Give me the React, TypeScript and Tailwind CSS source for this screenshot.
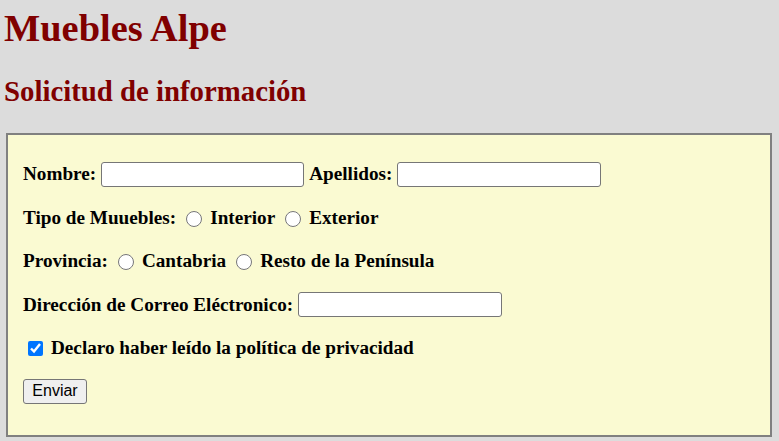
import React from "react";

export default function App() {
  const serif = "font-['Liberation_Serif','Times_New_Roman',serif]";
  return (
    <div className={`min-h-[441px] w-full bg-[#dcdcdc] ${serif} text-black`}>
      <h1 className="pt-[6px] pl-[4px] text-[38.4px] leading-[44px] font-bold text-[#800000]">
        Muebles Alpe
      </h1>
      <h2 className="mt-[24px] pl-[4px] text-[28.8px] leading-[34px] font-bold text-[#800000]">
        Solicitud de información
      </h2>
      <form
        onSubmit={(e) => e.preventDefault()}
        className="mt-[25px] ml-[6px] w-[766px] border-2 border-[#808080] bg-[#fafad2] pt-[26px] pb-[30px] pl-[15px] flex flex-col gap-[17.5px] text-[19.2px] leading-[22px] font-bold"
      >
        <div className="h-[26px] flex items-center">
          <span>Nombre:</span>
          <input
            type="text"
            className="ml-[5px] w-[203px] h-[25px] bg-white border border-[#767676] rounded-[3px]"
          />
          <span className="ml-[5px]">Apellidos:</span>
          <input
            type="text"
            className="ml-[5px] w-[204px] h-[25px] bg-white border border-[#767676] rounded-[3px]"
          />
        </div>
        <div className="h-[26px] flex items-center">
          <span>Tipo de Muuebles:</span>
          <input type="radio" name="tipo" className="ml-[10px] mt-[2px] w-[16px] h-[16px]" />
          <span className="ml-[8px]">Interior</span>
          <input type="radio" name="tipo" className="ml-[10px] mt-[2px] w-[16px] h-[16px]" />
          <span className="ml-[8px]">Exterior</span>
        </div>
        <div className="h-[26px] flex items-center">
          <span>Provincia:</span>
          <input type="radio" name="prov" className="ml-[10px] mt-[2px] w-[16px] h-[16px]" />
          <span className="ml-[8px]">Cantabria</span>
          <input type="radio" name="prov" className="ml-[10px] mt-[2px] w-[16px] h-[16px]" />
          <span className="ml-[8px]">Resto de la Península</span>
        </div>
        <div className="h-[26px] flex items-center">
          <span>Dirección de Correo Eléctronico:</span>
          <input
            type="text"
            className="ml-[5px] w-[204px] h-[25px] bg-white border border-[#767676] rounded-[3px]"
          />
        </div>
        <div className="h-[26px] flex items-center">
          <input type="checkbox" defaultChecked className="ml-[5px] w-[15px] h-[15px]" />
          <span className="ml-[8px]">Declaro haber leído la política de privacidad</span>
        </div>
        <div className="h-[26px] flex items-center">
          <button
            type="submit"
            className="-mt-[1px] w-[64px] h-[25px] bg-[#efefef] border border-[#767676] rounded-[3px] font-['Liberation_Sans',Arial,sans-serif] font-normal text-[16px] leading-[20px] text-black"
          >
            Enviar
          </button>
        </div>
      </form>
    </div>
  );
}
